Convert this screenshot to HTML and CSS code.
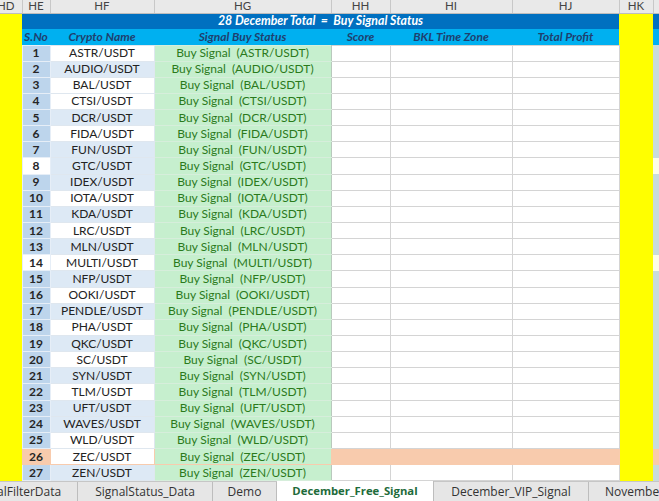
FILE: index.html
```html
<!DOCTYPE html>
<html lang="en">
<head>
  <meta charset="UTF-8">
  <title>December_Free_Signal</title>
  <link rel="stylesheet" href="styles.css">
</head>
<body>
  <div class="workbook">
    <table class="sheet">
      <colgroup>
        <col class="c-hd"><col class="c-he"><col class="c-hf"><col class="c-hg">
        <col class="c-hh"><col class="c-hi"><col class="c-hj"><col class="c-hk"><col class="c-hl">
      </colgroup>
      <thead>
        <tr class="letters">
          <th class="first">HD</th><th>HE</th><th>HF</th><th>HG</th><th>HH</th><th>HI</th><th>HJ</th><th>HK</th><th></th>
        </tr>
      </thead>
      <tbody>
        <tr class="title">
          <td class="yellow"></td>
          <td colspan="6">28 December Total&nbsp; =&nbsp; Buy Signal Status</td>
          <td class="yellow"></td><td class="edge"></td>
        </tr>
        <tr class="heads">
          <td class="yellow"></td>
          <td>S.No</td><td>Crypto Name</td><td>Signal Buy Status</td><td>Score</td><td>BKL Time Zone</td><td>Total Profit</td>
          <td class="yellow"></td><td class="edge"></td>
        </tr>
        <tr><td class="yellow"></td><td class="no">1</td><td class="name">ASTR/USDT</td><td class="sig">Buy Signal&nbsp; (ASTR/USDT)</td><td></td><td></td><td></td><td class="yellow"></td><td class="edge"></td></tr>
        <tr><td class="yellow"></td><td class="no">2</td><td class="name alt">AUDIO/USDT</td><td class="sig">Buy Signal&nbsp; (AUDIO/USDT)</td><td></td><td></td><td></td><td class="yellow"></td><td class="edge"></td></tr>
        <tr><td class="yellow"></td><td class="no">3</td><td class="name">BAL/USDT</td><td class="sig">Buy Signal&nbsp; (BAL/USDT)</td><td></td><td></td><td></td><td class="yellow"></td><td class="edge"></td></tr>
        <tr><td class="yellow"></td><td class="no">4</td><td class="name">CTSI/USDT</td><td class="sig">Buy Signal&nbsp; (CTSI/USDT)</td><td></td><td></td><td></td><td class="yellow"></td><td class="edge"></td></tr>
        <tr><td class="yellow"></td><td class="no">5</td><td class="name alt">DCR/USDT</td><td class="sig">Buy Signal&nbsp; (DCR/USDT)</td><td></td><td></td><td></td><td class="yellow"></td><td class="edge"></td></tr>
        <tr><td class="yellow"></td><td class="no">6</td><td class="name">FIDA/USDT</td><td class="sig">Buy Signal&nbsp; (FIDA/USDT)</td><td></td><td></td><td></td><td class="yellow"></td><td class="edge"></td></tr>
        <tr><td class="yellow"></td><td class="no">7</td><td class="name alt">FUN/USDT</td><td class="sig">Buy Signal&nbsp; (FUN/USDT)</td><td></td><td></td><td></td><td class="yellow"></td><td class="edge"></td></tr>
        <tr><td class="yellow"></td><td class="no plain">8</td><td class="name alt">GTC/USDT</td><td class="sig">Buy Signal&nbsp; (GTC/USDT)</td><td></td><td></td><td></td><td class="yellow"></td><td class="edge plain"></td></tr>
        <tr><td class="yellow"></td><td class="no">9</td><td class="name alt">IDEX/USDT</td><td class="sig">Buy Signal&nbsp; (IDEX/USDT)</td><td></td><td></td><td></td><td class="yellow"></td><td class="edge"></td></tr>
        <tr><td class="yellow"></td><td class="no">10</td><td class="name">IOTA/USDT</td><td class="sig">Buy Signal&nbsp; (IOTA/USDT)</td><td></td><td></td><td></td><td class="yellow"></td><td class="edge"></td></tr>
        <tr><td class="yellow"></td><td class="no">11</td><td class="name alt">KDA/USDT</td><td class="sig">Buy Signal&nbsp; (KDA/USDT)</td><td></td><td></td><td></td><td class="yellow"></td><td class="edge"></td></tr>
        <tr><td class="yellow"></td><td class="no">12</td><td class="name">LRC/USDT</td><td class="sig">Buy Signal&nbsp; (LRC/USDT)</td><td></td><td></td><td></td><td class="yellow"></td><td class="edge"></td></tr>
        <tr><td class="yellow"></td><td class="no">13</td><td class="name alt">MLN/USDT</td><td class="sig">Buy Signal&nbsp; (MLN/USDT)</td><td></td><td></td><td></td><td class="yellow"></td><td class="edge"></td></tr>
        <tr><td class="yellow"></td><td class="no plain">14</td><td class="name">MULTI/USDT</td><td class="sig">Buy Signal&nbsp; (MULTI/USDT)</td><td></td><td></td><td></td><td class="yellow"></td><td class="edge plain"></td></tr>
        <tr><td class="yellow"></td><td class="no">15</td><td class="name alt">NFP/USDT</td><td class="sig">Buy Signal&nbsp; (NFP/USDT)</td><td></td><td></td><td></td><td class="yellow"></td><td class="edge"></td></tr>
        <tr><td class="yellow"></td><td class="no">16</td><td class="name">OOKI/USDT</td><td class="sig">Buy Signal&nbsp; (OOKI/USDT)</td><td></td><td></td><td></td><td class="yellow"></td><td class="edge"></td></tr>
        <tr><td class="yellow"></td><td class="no">17</td><td class="name alt">PENDLE/USDT</td><td class="sig">Buy Signal&nbsp; (PENDLE/USDT)</td><td></td><td></td><td></td><td class="yellow"></td><td class="edge"></td></tr>
        <tr><td class="yellow"></td><td class="no">18</td><td class="name">PHA/USDT</td><td class="sig">Buy Signal&nbsp; (PHA/USDT)</td><td></td><td></td><td></td><td class="yellow"></td><td class="edge"></td></tr>
        <tr><td class="yellow"></td><td class="no">19</td><td class="name alt">QKC/USDT</td><td class="sig">Buy Signal&nbsp; (QKC/USDT)</td><td></td><td></td><td></td><td class="yellow"></td><td class="edge"></td></tr>
        <tr><td class="yellow"></td><td class="no">20</td><td class="name">SC/USDT</td><td class="sig">Buy Signal&nbsp; (SC/USDT)</td><td></td><td></td><td></td><td class="yellow"></td><td class="edge"></td></tr>
        <tr><td class="yellow"></td><td class="no">21</td><td class="name alt">SYN/USDT</td><td class="sig">Buy Signal&nbsp; (SYN/USDT)</td><td></td><td></td><td></td><td class="yellow"></td><td class="edge"></td></tr>
        <tr><td class="yellow"></td><td class="no">22</td><td class="name">TLM/USDT</td><td class="sig">Buy Signal&nbsp; (TLM/USDT)</td><td></td><td></td><td></td><td class="yellow"></td><td class="edge"></td></tr>
        <tr><td class="yellow"></td><td class="no">23</td><td class="name alt">UFT/USDT</td><td class="sig">Buy Signal&nbsp; (UFT/USDT)</td><td></td><td></td><td></td><td class="yellow"></td><td class="edge"></td></tr>
        <tr><td class="yellow"></td><td class="no">24</td><td class="name alt">WAVES/USDT</td><td class="sig">Buy Signal&nbsp; (WAVES/USDT)</td><td></td><td></td><td></td><td class="yellow"></td><td class="edge"></td></tr>
        <tr><td class="yellow"></td><td class="no">25</td><td class="name">WLD/USDT</td><td class="sig">Buy Signal&nbsp; (WLD/USDT)</td><td></td><td></td><td></td><td class="yellow"></td><td class="edge"></td></tr>
        <tr class="flag"><td class="yellow"></td><td class="no">26</td><td class="name">ZEC/USDT</td><td class="sig">Buy Signal&nbsp; (ZEC/USDT)</td><td></td><td></td><td></td><td class="yellow"></td><td class="edge"></td></tr>
        <tr><td class="yellow"></td><td class="no">27</td><td class="name alt">ZEN/USDT</td><td class="sig">Buy Signal&nbsp; (ZEN/USDT)</td><td></td><td></td><td></td><td class="yellow"></td><td class="edge"></td></tr>
      </tbody>
    </table>

    <div class="tabs">
      <div class="tab cut">alFilterData</div>
      <div class="tab w-status">SignalStatus_Data</div>
      <div class="tab w-demo">Demo</div>
      <div class="tab active">December_Free_Signal</div>
      <div class="tab w-vip">December_VIP_Signal</div>
      <div class="tab">November_Free_Signal</div>
    </div>
  </div>
</body>
</html>
```

FILE: styles.css
```css
* {
    margin: 0;
    padding: 0;
    box-sizing: border-box;
}

:root {
    --grid: #d4d4d4;
    --yellow: #ffff00;
    --title: #0070c0;
    --heads: #00b0f0;
    --navy: #1f3f6e;
    --no-blue: #bdd5ec;
    --name-blue: #dde9f5;
    --good-bg: #c6efce;
    --good-text: #2b7a1c;
    --peach: #f8cbad;
}

body {
    width: 659px;
    height: 501px;
    overflow: hidden;
    background: #ffffff;
    font-family: Lato, "Liberation Sans", sans-serif;
    color: #222;
}

.workbook {
    display: flex;
    flex-direction: column;
    width: 659px;
    height: 501px;
    overflow: hidden;
}

.sheet {
    table-layout: fixed;
    border-collapse: collapse;
    width: 659px;
    font-size: 12px;
}

.c-hd { width: 22px; }
.c-he { width: 28px; }
.c-hf { width: 104px; }
.c-hg { width: 177px; }
.c-hh { width: 59px; }
.c-hi { width: 122px; }
.c-hj { width: 107px; }
.c-hk { width: 34px; }
.c-hl { width: 6px; }

td, th {
    height: 16.15px;
    padding: 0;
    border: 1px solid var(--grid);
    text-align: center;
    white-space: nowrap;
    overflow: hidden;
    line-height: 14px;
}

/* column letters */
.letters th {
    height: 13px;
    background: #e9e9e9;
    border: none;
    border-right: 1px solid #c8c8c8;
    border-bottom: 1px solid #bdbdbd;
    font-weight: normal;
    font-size: 11.5px;
    color: #444;
    line-height: 12px;
}

.letters th.first {
    text-align: left;
    text-indent: -3px;
}

.title td {
    height: 16px;
    background: var(--title);
    color: #fff;
    font-weight: bold;
    font-style: italic;
    font-size: 12.3px;
    border: none;
}

.heads td {
    height: 16px;
    background: var(--heads);
    color: var(--navy);
    font-weight: bold;
    font-style: italic;
    border: none;
}

td.yellow,
.title td.yellow,
.heads td.yellow {
    background: var(--yellow);
    border: none;
}

.title td.edge { background: var(--title); }
.heads td.edge { background: var(--heads); }

td.edge {
    background: #c9dcdb;
    border: none;
}

td.edge.plain { background: #fdfde8; }

td.no {
    background: var(--no-blue);
    font-weight: bold;
    color: #262626;
    border-color: #e6eef7;
}

td.no.plain { background: #ffffff; }

td.name {
    background: #fff;
    border-color: #dfe7ef;
}

td.name.alt { background: var(--name-blue); }

td.sig {
    background: var(--good-bg);
    color: var(--good-text);
    border-color: #d6eedb;
    border-right-color: #b9c9bd;
}

.flag td { background: var(--peach); border-color: var(--peach); }
.flag td.no { background: var(--peach); }
.flag td.name { background: #fff; }
.flag td.sig { background: var(--good-bg); }
.flag td.yellow { background: var(--yellow); }
.flag td.edge { background: var(--peach); }

/* sheet tabs */
.tabs {
    display: flex;
    height: 20px;
    margin-top: auto;
    background: #e6e6e6;
    border-top: 1px solid #c6c6c6;
    font-family: "Open Sans", "Liberation Sans", sans-serif;
    font-size: 12px;
    color: #333;
    white-space: nowrap;
}

.tab {
    flex: none;
    padding: 0 16px;
    line-height: 19px;
    text-align: center;
    border-right: 1px solid #bdbdbd;
}

.tab.cut {
    width: 78px;
    padding: 0;
    text-align: left;
    text-indent: -3px;
    overflow: hidden;
}

.w-status { width: 135px; padding: 0; }
.w-demo { width: 64px; padding: 0; }
.w-vip { width: 155px; padding: 0; }

.tab.active {
    width: 157px;
    padding: 0;
    background: #fff;
    color: #1e6b3a;
    font-weight: bold;
    font-size: 11.3px;
    margin-top: -1px;
    line-height: 20px;
}
```
